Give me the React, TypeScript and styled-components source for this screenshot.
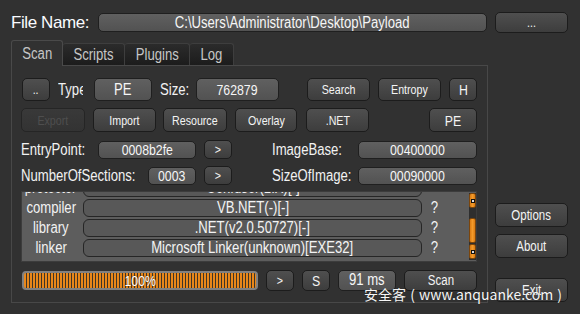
import React, { useLayoutEffect, useRef } from 'react'
import styled, { createGlobalStyle } from 'styled-components'

const GlobalStyle = createGlobalStyle`
  html, body {
    margin: 0;
    padding: 0;
    background: #313131;
  }
  body {
    font-family: 'Liberation Sans', Arial, sans-serif;
    color: #f2f2f2;
  }
`

// the app draws with a tall, narrow face; squeeze Arial metrics to match
const Narrow = styled.span<{ $left?: boolean }>`
  display: inline-block;
  white-space: nowrap;
  transform: scaleX(0.82);
  transform-origin: ${(p) => (p.$left ? 'left' : 'center')} center;
`

const Window = styled.div`
  position: relative;
  width: 580px;
  height: 314px;
  box-sizing: border-box;
  padding: 12px 12px 0 11px;
  overflow: hidden;
  display: flex;
  flex-direction: column;
`

const TopBar = styled.div`
  display: flex;
  align-items: center;
  height: 21px;
`

const FileLabel = styled.div`
  width: 87px;
  font-size: 17px;
  letter-spacing: -0.4px;
  color: #fafcff;
  white-space: nowrap;
`

type BoxProps = { $w: number; $h?: number; $ml?: number; $mt?: number; $size?: number }

// the lighter, read-only value boxes
const FieldBox = styled.div<BoxProps>`
  width: ${(p) => p.$w}px;
  height: ${(p) => p.$h ?? 18}px;
  margin-left: ${(p) => p.$ml ?? 0}px;
  box-sizing: border-box;
  border: 1px solid #1f1f1f;
  border-radius: 5px;
  background: linear-gradient(#606060, #525252);
  font-size: ${(p) => p.$size ?? 15}px;
  color: #f6f6f6;
  display: flex;
  align-items: center;
  justify-content: center;
  overflow: hidden;
  flex-shrink: 0;
`

const ButtonBox = styled.button<BoxProps>`
  width: ${(p) => p.$w}px;
  height: ${(p) => p.$h ?? 23}px;
  margin: ${(p) => p.$mt ?? 0}px 0 0 ${(p) => p.$ml ?? 0}px;
  padding: 0;
  box-sizing: border-box;
  border: 1px solid #1c1c1c;
  border-radius: 5px;
  background: linear-gradient(#4f4f4f, #3d3d3d);
  font-family: inherit;
  font-size: ${(p) => p.$size ?? 13}px;
  color: #f4f4f4;
  display: flex;
  align-items: center;
  justify-content: center;
  flex-shrink: 0;
  &:disabled {
    background: linear-gradient(#393939, #333333);
    border-color: #252525;
    color: #4e4e4e;
  }
`

const LabelBox = styled.div<{ $w: number; $ml?: number }>`
  width: ${(p) => p.$w}px;
  margin-left: ${(p) => p.$ml ?? 0}px;
  font-size: 16px;
  color: #f2f2f2;
  overflow: hidden;
  flex-shrink: 0;
`

type Kids = { children?: React.ReactNode }

function Field({ children, ...rest }: BoxProps & Kids) {
  return (
    <FieldBox {...rest}>
      <Narrow>{children}</Narrow>
    </FieldBox>
  )
}

function Button({ children, disabled, ...rest }: BoxProps & Kids & { disabled?: boolean }) {
  return (
    <ButtonBox {...rest} disabled={disabled}>
      <Narrow>{children}</Narrow>
    </ButtonBox>
  )
}

function Label({ children, ...rest }: { $w: number; $ml?: number } & Kids) {
  return (
    <LabelBox {...rest}>
      <Narrow $left>{children}</Narrow>
    </LabelBox>
  )
}

const Main = styled.div`
  display: flex;
  gap: 7px;
  margin-top: 7px;
`

const LeftCol = styled.div`
  width: 477px;
  display: flex;
  flex-direction: column;
`

const TabBar = styled.div`
  position: relative;
  z-index: 1;
  display: flex;
  align-items: flex-end;
  height: 26px;
  margin-bottom: -1px;
`

const TabBox = styled.div<{ $w: number; $active?: boolean }>`
  width: ${(p) => p.$w}px;
  height: ${(p) => (p.$active ? 26 : 22)}px;
  margin-bottom: ${(p) => (p.$active ? 0 : 1)}px;
  box-sizing: border-box;
  border: 1px solid ${(p) => (p.$active ? '#4a4a4a' : '#3e3e3e')};
  border-bottom: none;
  border-left-width: ${(p) => (p.$active ? 1 : 0)}px;
  border-radius: 3px 3px 0 0;
  background: ${(p) => (p.$active ? '#313131' : 'linear-gradient(#2b2b2b, #1c1c1c)')};
  font-size: 16px;
  color: #c6c6c6;
  display: flex;
  align-items: center;
  justify-content: center;
  padding-top: ${(p) => (p.$active ? 1 : 0)}px;
`

function Tab({ children, ...rest }: { $w: number; $active?: boolean } & Kids) {
  return (
    <TabBox {...rest}>
      <Narrow>{children}</Narrow>
    </TabBox>
  )
}

const Panel = styled.div`
  height: 238px;
  box-sizing: border-box;
  border: 1px solid #484848;
  padding: 12px 10px 0 9px;
  display: flex;
  flex-direction: column;
`

const Row = styled.div<{ $mt?: number; $h: number }>`
  display: flex;
  align-items: center;
  height: ${(p) => p.$h}px;
  margin-top: ${(p) => p.$mt ?? 0}px;
`

const List = styled.div`
  margin-top: 6px;
  width: 456px;
  height: 71px;
  box-sizing: border-box;
  border: 1px solid #3c3c3c;
  background: #5d5d5d;
  display: flex;
`

const ListBody = styled.div`
  flex: 1;
  overflow: hidden;
`

const ListRow = styled.div`
  display: flex;
  align-items: center;
  height: 20px;
`

const ListName = styled.div`
  width: 58px;
  display: flex;
  justify-content: center;
  font-size: 16px;
  color: #f2f2f2;
`

const ListValue = styled.div`
  width: 339px;
  height: 18px;
  margin-left: 3px;
  box-sizing: border-box;
  border: 1px solid #262626;
  border-radius: 6px;
  background: #585858;
  font-size: 16px;
  line-height: 16px;
  display: flex;
  justify-content: center;
  color: #f4f4f4;
`

const Question = styled.div`
  margin-left: 8px;
  font-size: 16px;
  color: #f2f2f2;
`

const ScrollBar = styled.div`
  width: 7px;
  margin: 1px 0;
  display: flex;
  flex-direction: column;
  background: #2e2e2e;
`

const ScrollPiece = styled.div<{ $h: number; $mt?: number }>`
  height: ${(p) => p.$h}px;
  margin-top: ${(p) => p.$mt ?? 0}px;
  box-sizing: border-box;
  border: 1px solid #7b450b;
  border-radius: 2px;
  background: linear-gradient(90deg, #d97a12, #f39a2a 50%, #d97a12);
  display: flex;
  align-items: center;
  justify-content: center;
`

const Grip = styled.div`
  width: 4px;
  height: 4px;
  background: #111;
  display: flex;
  align-items: center;
  justify-content: center;
  &::after {
    content: '';
    width: 2px;
    height: 2px;
    background: #ddd;
  }
`

const Progress = styled.div<{ $ml?: number }>`
  width: 236px;
  height: 19px;
  margin-left: ${(p) => p.$ml ?? 0}px;
  box-sizing: border-box;
  border: 2px solid #808080;
  border-radius: 4px;
  background: repeating-linear-gradient(90deg, #e8871a 0 2px, #3f3426 2px 3px);
  font-size: 15px;
  color: #ffffff;
  text-shadow: 0 0 2px #3a2a10;
  display: flex;
  align-items: center;
  justify-content: center;
`

const RightCol = styled.div`
  display: flex;
  flex-direction: column;
  padding-top: 163px;
`

const Watermark = styled.div`
  position: absolute;
  left: 364px;
  top: 284px;
  font-family: 'Noto Sans CJK SC', 'Noto Sans', sans-serif;
  font-size: 14px;
  word-spacing: 1px;
  color: #f6f6f6;
  white-space: nowrap;
  text-shadow: 0 0 1px rgba(0, 0, 0, 0.4);
`

const entries = [
  { name: 'protector', value: 'Confuser(1.X)[-]', mark: '' },
  { name: 'compiler', value: 'VB.NET(-)[-]', mark: '?' },
  { name: 'library', value: '.NET(v2.0.50727)[-]', mark: '?' },
  { name: 'linker', value: 'Microsoft Linker(unknown)[EXE32]', mark: '?' },
]

function ScanList() {
  const body = useRef<HTMLDivElement>(null)
  useLayoutEffect(() => {
    // the list is scrolled a little past its first row
    if (body.current) body.current.scrollTop = 14
  }, [])
  return (
    <List>
      <ListBody ref={body}>
        {entries.map((e) => (
          <ListRow key={e.name}>
            <ListName>
              <Narrow>{e.name}</Narrow>
            </ListName>
            <ListValue>
              <Narrow>{e.value}</Narrow>
            </ListValue>
            <Question>
              <Narrow>{e.mark}</Narrow>
            </Question>
          </ListRow>
        ))}
        <ListRow />
      </ListBody>
      <ScrollBar>
        <ScrollPiece $h={15}>
          <Grip />
        </ScrollPiece>
        <ScrollPiece $h={25} $mt={10} />
        <ScrollPiece $h={15} $mt={1}>
          <Grip />
        </ScrollPiece>
      </ScrollBar>
    </List>
  )
}

export default function App() {
  return (
    <>
      <GlobalStyle />
      <Window>
        <TopBar>
          <FileLabel>File Name:</FileLabel>
          <Field $w={389} $h={19} $size={16}>
            C:\Users\Administrator\Desktop\Payload
          </Field>
          <Button $w={73} $h={21} $ml={8}>
            ...
          </Button>
        </TopBar>
        <Main>
          <LeftCol>
            <TabBar>
              <Tab $w={52} $active>
                Scan
              </Tab>
              <Tab $w={62}>Scripts</Tab>
              <Tab $w={65}>Plugins</Tab>
              <Tab $w={44}>Log</Tab>
            </TabBar>
            <Panel>
              <Row $h={23}>
                <Button $w={28} $ml={1}>
                  ..
                </Button>
                <Label $w={25} $ml={8}>
                  Type
                </Label>
                <Field $w={58} $h={23} $ml={11} $size={16}>
                  PE
                </Field>
                <Label $w={36} $ml={8}>
                  Size:
                </Label>
                <Field $w={83} $h={23}>
                  762879
                </Field>
                <Button $w={63} $ml={28}>
                  Search
                </Button>
                <Button $w={63} $ml={8}>
                  Entropy
                </Button>
                <Button $w={28} $ml={8} $size={15}>
                  H
                </Button>
              </Row>
              <Row $h={24} $mt={7}>
                <Button $w={64} $h={24} disabled>
                  Export
                </Button>
                <Button $w={63} $h={24} $ml={8}>
                  Import
                </Button>
                <Button $w={64} $h={24} $ml={7}>
                  Resource
                </Button>
                <Button $w={62} $h={24} $ml={8}>
                  Overlay
                </Button>
                <Button $w={63} $h={24} $ml={9}>
                  .NET
                </Button>
                <Button $w={48} $h={24} $ml={60} $size={15}>
                  PE
                </Button>
              </Row>
              <Row $h={19} $mt={8}>
                <Label $w={77}>EntryPoint:</Label>
                <Field $w={98}>0008b2fe</Field>
                <Button $w={28} $h={19} $ml={8}>
                  &gt;
                </Button>
                <Label $w={86} $ml={40}>
                  ImageBase:
                </Label>
                <Field $w={119}>00400000</Field>
              </Row>
              <Row $h={19} $mt={7}>
                <Label $w={127}>NumberOfSections:</Label>
                <Field $w={48}>0003</Field>
                <Button $w={28} $h={19} $ml={8}>
                  &gt;
                </Button>
                <Label $w={86} $ml={40}>
                  SizeOfImage:
                </Label>
                <Field $w={119}>00090000</Field>
              </Row>
              <ScanList />
              <Row $h={22} $mt={7}>
                <Progress $ml={1}>
                  <Narrow>100%</Narrow>
                </Progress>
                <Button $w={28} $h={21} $ml={8}>
                  &gt;
                </Button>
                <Button $w={28} $h={21} $ml={8} $size={15}>
                  S
                </Button>
                <Field $w={58} $h={21} $ml={8} $size={16}>
                  91 ms
                </Field>
                <Button $w={73} $h={21} $ml={8} $size={14}>
                  Scan
                </Button>
              </Row>
            </Panel>
          </LeftCol>
          <RightCol>
            <Button $w={73} $h={24} $size={14}>
              Options
            </Button>
            <Button $w={73} $h={24} $mt={7} $size={14}>
              About
            </Button>
            <Button $w={73} $h={24} $mt={20} $size={14}>
              Exit
            </Button>
          </RightCol>
        </Main>
        <Watermark>安全客 ( www.anquanke.com )</Watermark>
      </Window>
    </>
  )
}
